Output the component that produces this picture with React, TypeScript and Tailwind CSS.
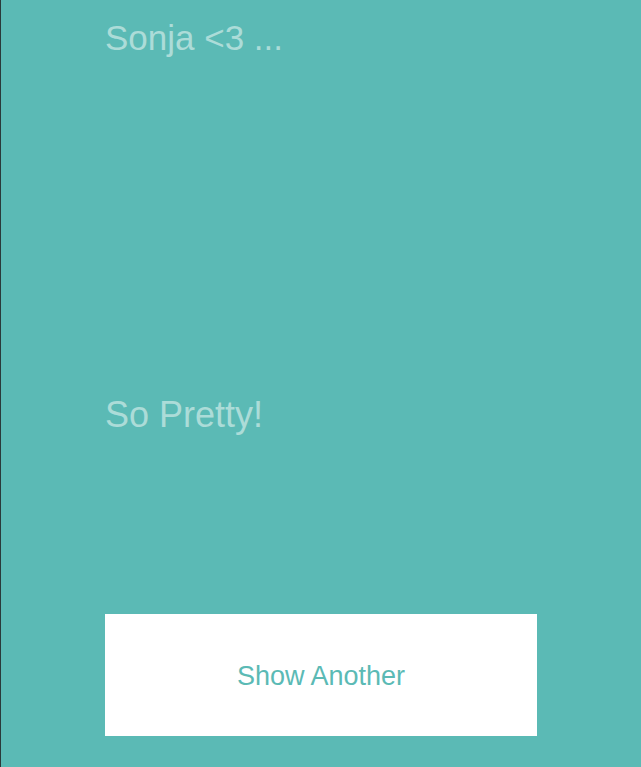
export default function App() {
  return (
    <div className="flex h-[767px] w-full bg-[#5bbab5] font-['Liberation_Sans',sans-serif]">
      <div className="w-px bg-[#2a3a3a]" />
      <div className="mx-auto flex w-[432px] flex-col">
        <h1 className="mt-[16px] text-[35px] font-light leading-[44px] text-[#acdcd8]">Sonja &lt;3 ...</h1>
        <p className="mt-[333px] text-[36px] font-light leading-[44px] text-[#acdcd8]">So Pretty!</p>
        <button className="mt-[177px] flex h-[122px] w-full items-center justify-center bg-white pt-[2px] text-[27px] text-[#5bbab5]">
          Show Another
        </button>
      </div>
    </div>
  );
}
